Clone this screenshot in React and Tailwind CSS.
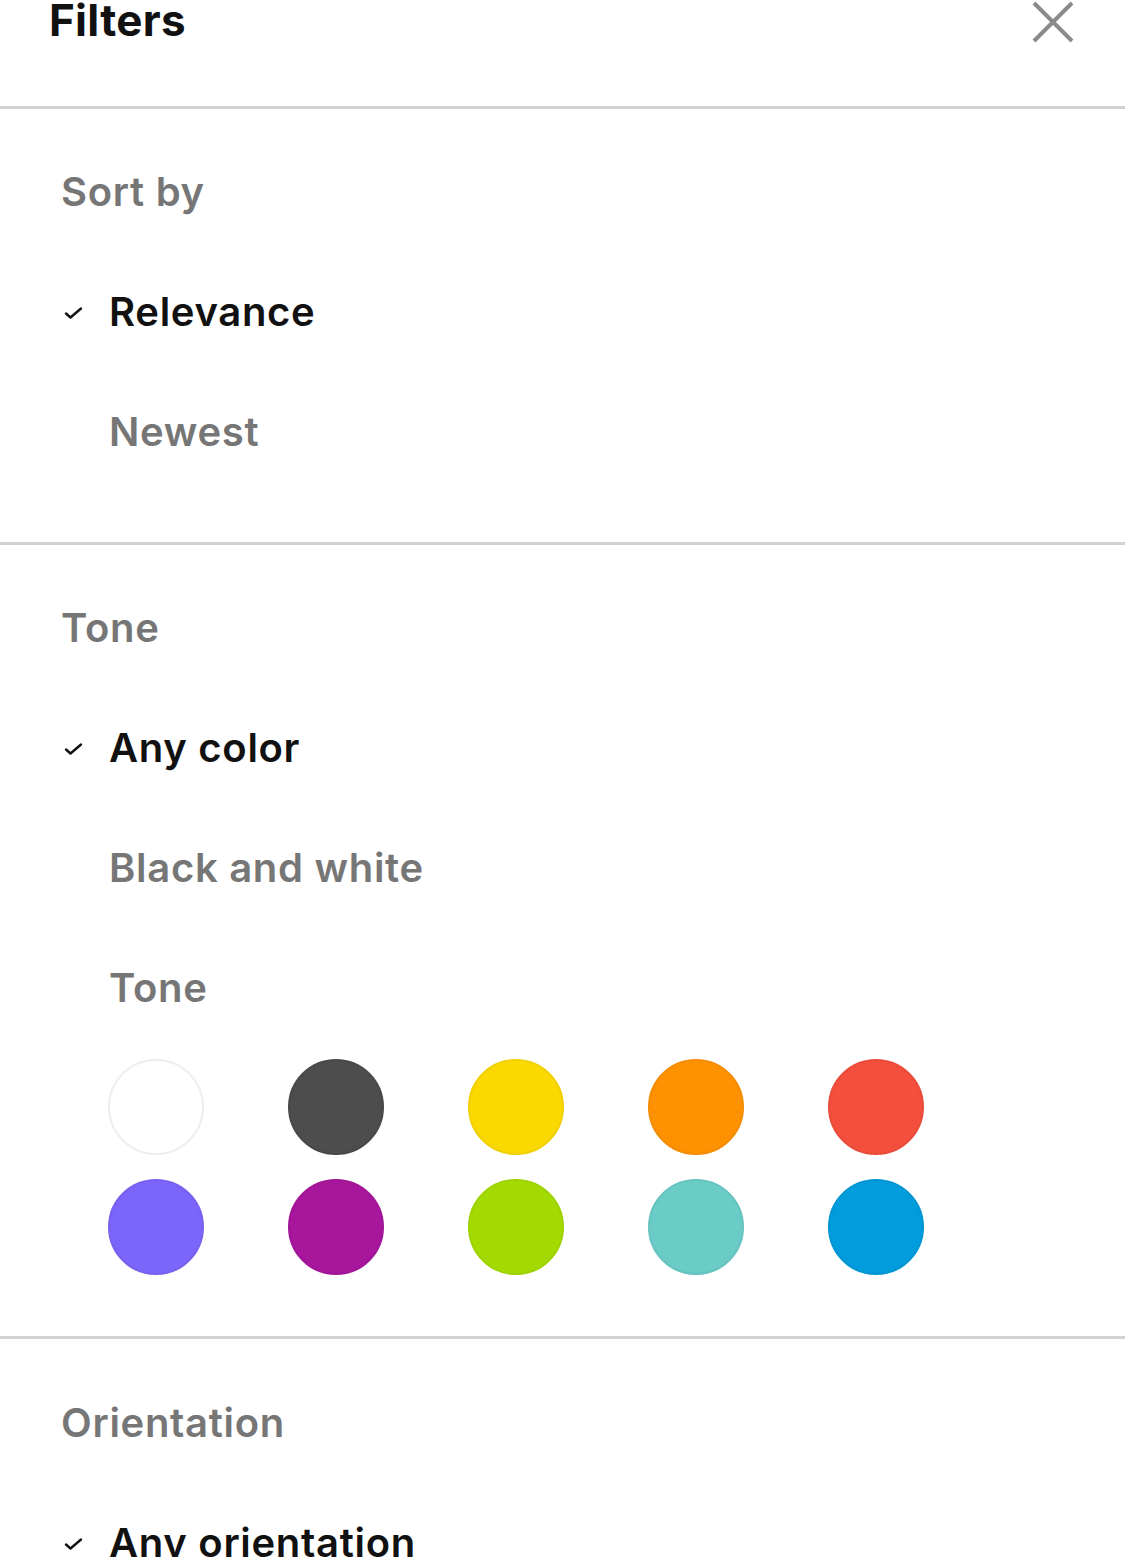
import React from "react";

const Check = () => (
  <svg width="20" height="14" viewBox="0 0 20 14" className="block">
    <path d="M2 7.5 L6.5 11.5 L17 2.5" fill="none" stroke="#111" strokeWidth="2.4" strokeLinecap="round" strokeLinejoin="round" />
  </svg>
);

const Header = ({ children }) => (
  <div className="h-[120px] pl-[61px] text-[40px] leading-[120px] font-semibold text-[#767676] tracking-[0.7px]">{children}</div>
);

const Option = ({ children, checked }) => (
  <div className="h-[120px] flex items-center">
    <div className="w-[109px] shrink-0 flex justify-start pl-[64px] pt-[2px]">{checked ? <Check /> : null}</div>
    <div className={"text-[40px] leading-[120px] font-semibold tracking-[0.7px] " + (checked ? "text-[#111111]" : "text-[#767676]")}>{children}</div>
  </div>
);

const Divider = () => <div className="h-[3px] bg-[#d1d1d1]" />;

const colors = [
  { c: "#ffffff", b: "border-[#eeeeee]" },
  { c: "#4d4d4d", b: "border-[#484848]" },
  { c: "#fad900", b: "border-[#f0d000]" },
  { c: "#fe9100", b: "border-[#f48b00]" },
  { c: "#f44f3d", b: "border-[#ea4b3a]" },
  { c: "#7b65fa", b: "border-[#7661f0]" },
  { c: "#a8169c", b: "border-[#a11596]" },
  { c: "#a3db00", b: "border-[#9dd200]" },
  { c: "#6bcbc7", b: "border-[#66c3bf]" },
  { c: "#009cdc", b: "border-[#0096d4]" },
];

export default function App() {
  return (
    <div className="w-[1125px] h-[1557px] overflow-hidden bg-white font-['Inter',sans-serif]">
      <div className="h-[106px] flex justify-between items-start pl-[49px] pr-[50px]">
        <div className="text-[44px] leading-[44px] font-bold text-[#111111] -mt-[2px] tracking-[0.3px]">Filters</div>
        <svg width="44" height="44" viewBox="0 0 44 44">
          <path d="M3 3 L41 41 M41 3 L3 41" stroke="#8a8a8a" strokeWidth="4" strokeLinecap="butt" />
        </svg>
      </div>
      <Divider />
      <div className="pt-[23px] pb-[50px]">
        <Header>Sort by</Header>
        <Option checked>Relevance</Option>
        <Option>Newest</Option>
      </div>
      <Divider />
      <div className="pt-[23px] pb-[61px]">
        <Header>Tone</Header>
        <Option checked>Any color</Option>
        <Option>Black and white</Option>
        <Option>Tone</Option>
        <div className="mt-[11px] pl-[108px] grid grid-cols-[repeat(5,96px)] gap-x-[84px] gap-y-[24px]">
          {colors.map((x, i) => (
            <div key={i} className={"w-[96px] h-[96px] rounded-full border-2 " + x.b} style={{ backgroundColor: x.c }} />
          ))}
        </div>
      </div>
      <Divider />
      <div className="pt-[24px]">
        <Header>Orientation</Header>
        <Option checked>Any orientation</Option>
      </div>
    </div>
  );
}
